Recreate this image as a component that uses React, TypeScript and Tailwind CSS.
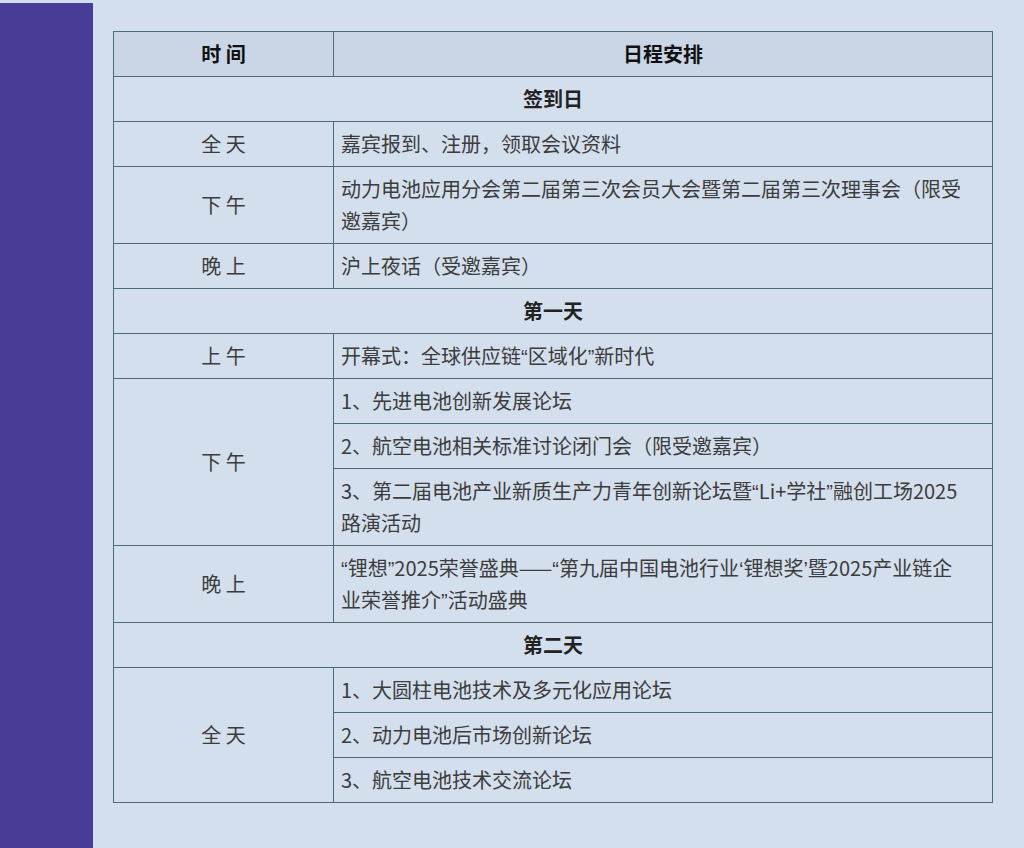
import React from "react";

type Row =
  | { kind: "day"; title: string }
  | { kind: "slot"; time: string; items: React.ReactNode[] };

// narrow quote marks, like the reference's Latin-width quotes
const Q = ({ c }: { c: string }) => (
  <span className="leading-none" style={{ fontFamily: '"Liberation Sans", sans-serif' }}>
    {c}
  </span>
);

const ROWS: Row[] = [
  { kind: "day", title: "签到日" },
  { kind: "slot", time: "全 天", items: ["嘉宾报到、注册，领取会议资料"] },
  {
    kind: "slot",
    time: "下 午",
    items: [
      <>
        动力电池应用分会第二届第三次会员大会暨第二届第三次理事会（限受
        <br />
        邀嘉宾）
      </>,
    ],
  },
  { kind: "slot", time: "晚 上", items: ["沪上夜话（受邀嘉宾）"] },
  { kind: "day", title: "第一天" },
  {
    kind: "slot",
    time: "上 午",
    items: [
      <>
        开幕式：全球供应链<Q c="“" />区域化<Q c="”" />新时代
      </>,
    ],
  },
  {
    kind: "slot",
    time: "下 午",
    items: [
      "1、先进电池创新发展论坛",
      "2、航空电池相关标准讨论闭门会（限受邀嘉宾）",
      <>
        3、第二届电池产业新质生产力青年创新论坛暨<Q c="“" />Li+学社<Q c="”" />融创工场2025
        <br />
        路演活动
      </>,
    ],
  },
  {
    kind: "slot",
    time: "晚 上",
    items: [
      <>
        <Q c="“" />锂想<Q c="”" />2025荣誉盛典——<Q c="“" />第九届中国电池行业<Q c="‘" />锂想奖<Q c="’" />暨2025产业链企
        <br />
        业荣誉推介<Q c="”" />活动盛典
      </>,
    ],
  },
  { kind: "day", title: "第二天" },
  {
    kind: "slot",
    time: "全 天",
    items: ["1、大圆柱电池技术及多元化应用论坛", "2、动力电池后市场创新论坛", "3、航空电池技术交流论坛"],
  },
];

const cell = "border border-[#4b6b79] py-[6px] leading-[32px]";

export default function App() {
  return (
    <div
      className="flex min-h-[848px] bg-[#d4dfee] pt-[3px]"
      style={{ fontFamily: '"Microsoft YaHei", "Noto Sans CJK SC", "Noto Sans", sans-serif' }}
    >
      <div className="w-[93px] shrink-0 bg-[#483d96]" />
      <div className="pl-[20px] pt-[28px]">
        <table className="w-[880px] border-collapse text-[20px] text-[#3c3c3c]">
          <thead>
            <tr className="bg-[#cad6e6] font-bold text-[#111]">
              <th className={`${cell} w-[220px] text-center`}>时 间</th>
              <th className={`${cell} text-center`}>日程安排</th>
            </tr>
          </thead>
          <tbody>
            {ROWS.map((r, i) =>
              r.kind === "day" ? (
                <tr key={i}>
                  <td colSpan={2} className={`${cell} text-center font-bold text-[#222]`}>
                    {r.title}
                  </td>
                </tr>
              ) : (
                r.items.map((it, j) => (
                  <tr key={`${i}-${j}`}>
                    {j === 0 && (
                      <td rowSpan={r.items.length} className={`${cell} text-center align-middle`}>
                        {r.time}
                      </td>
                    )}
                    <td className={`${cell} whitespace-nowrap px-[7px] text-left`}>{it}</td>
                  </tr>
                ))
              )
            )}
          </tbody>
        </table>
      </div>
    </div>
  );
}
